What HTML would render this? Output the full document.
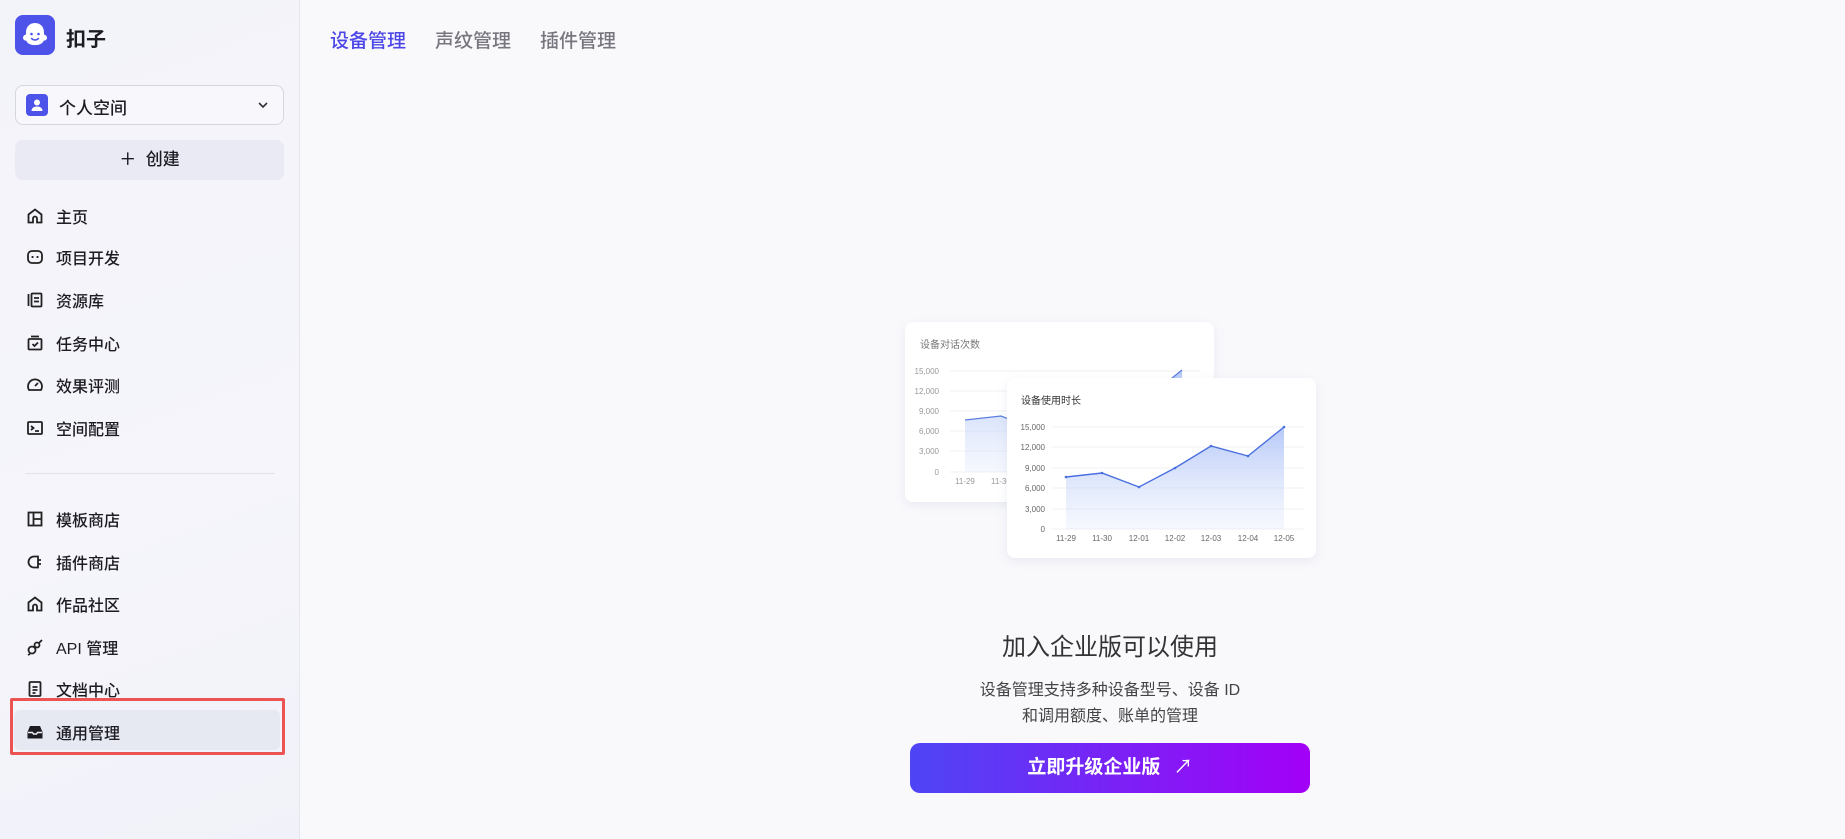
<!DOCTYPE html>
<html><head><meta charset="utf-8"><style>
*{margin:0;padding:0;box-sizing:border-box}
body{width:1845px;height:839px;overflow:hidden;background:#f9f9fc;font-family:"Liberation Sans","Noto Sans CJK SC",sans-serif;color:#1d1c23;position:relative}
.side{position:absolute;left:0;top:0;width:300px;height:839px;background:linear-gradient(160deg,#f3f4fa,#f5f5fb 60%,#f1f2f9);border-right:1px solid #e6e7ee}
.abs{position:absolute}
.nav{position:absolute;left:26px;font-size:16px;font-weight:500;display:flex;align-items:center;height:24px;color:#1d1c23}
.nav svg{width:18px;height:18px;margin-right:12px}
.tab{position:absolute;top:26px;font-size:19px;color:#77767e;font-weight:500}
</style></head><body>
<div class="side">
  <svg class="abs" style="left:15px;top:15px" width="40" height="40" viewBox="0 0 40 40"><rect width="40" height="40" rx="8" fill="#4d53e8"/><path d="M20 8c-6 0-9 4.5-9 9.5v2c-2 .5-3 1.8-3 3.3 0 1.8 1.5 3 3.3 2.8 1 3 4.5 4.5 8.7 4.5s7.7-1.5 8.7-4.5c1.8.2 3.3-1 3.3-2.8 0-1.5-1-2.8-3-3.3v-2C29 12.5 26 8 20 8z" fill="#fff"/><circle cx="16.5" cy="19" r="1.3" fill="#4d53e8"/><circle cx="23.5" cy="19" r="1.3" fill="#4d53e8"/><path d="M16.5 23.5q3.5 3 7 0" stroke="#4d53e8" stroke-width="1.5" fill="none" stroke-linecap="round"/></svg>
  <div class="abs" style="left:66px;top:23px;font-size:20px;font-weight:bold">扣子</div>
  <div class="abs" style="left:15px;top:85px;width:269px;height:40px;border:1px solid #d5d6de;border-radius:8px;background:#f8f8fc"></div>
  <svg class="abs" style="left:26px;top:94px" width="22" height="22" viewBox="0 0 22 22"><rect width="22" height="22" rx="4" fill="#4d53e8"/><circle cx="11" cy="8.5" r="3" fill="#fff"/><path d="M5.5 17c0-3 2.5-4.5 5.5-4.5s5.5 1.5 5.5 4.5z" fill="#fff"/></svg>
  <div class="abs" style="left:59px;top:94px;font-size:17px;font-weight:500">个人空间</div>
  <svg class="abs" style="left:256px;top:98px" width="14" height="14" viewBox="0 0 14 14"><path d="M3 5l4 4 4-4" stroke="#333" stroke-width="1.6" fill="none"/></svg>
  <div class="abs" style="left:15px;top:140px;width:269px;height:40px;border-radius:8px;background:#e9eaf3;text-align:center;line-height:40px;font-size:17px;font-weight:500">＋&nbsp; 创建</div>

  <div class="nav" style="top:204px"><svg viewBox="0 0 18 18" fill="none" stroke="#222" stroke-width="1.8"><path d="M2.5 7.5L9 2.5l6.5 5V15.5H11v-4a2 2 0 0 0-4 0v4H2.5z"/></svg>主页</div>
  <div class="nav" style="top:245px"><svg viewBox="0 0 18 18" fill="none" stroke="#222" stroke-width="1.8"><rect x="2" y="3" width="14" height="12" rx="4"/><path d="M6.5 8v2M11.5 8v2"/></svg>项目开发</div>
  <div class="nav" style="top:288px"><svg viewBox="0 0 18 18" fill="none" stroke="#222" stroke-width="1.8"><path d="M2.5 3v12"/><rect x="5.5" y="2.5" width="10" height="13" rx="1"/><path d="M8 7h5M8 10.5h5"/></svg>资源库</div>
  <div class="nav" style="top:331px"><svg viewBox="0 0 18 18" fill="none" stroke="#222" stroke-width="1.8"><path d="M5 2.5h8"/><rect x="2.5" y="5" width="13" height="10.5" rx="1"/><path d="M6.5 10l2 2 3.5-3.5"/></svg>任务中心</div>
  <div class="nav" style="top:373px"><svg viewBox="0 0 18 18" fill="none" stroke="#222" stroke-width="1.8"><path d="M3 14a7 7 0 1 1 12 0z"/><path d="M9 10l3-3"/></svg>效果评测</div>
  <div class="nav" style="top:416px"><svg viewBox="0 0 18 18" fill="none" stroke="#222" stroke-width="1.8"><rect x="2" y="3" width="14" height="12" rx="1"/><path d="M5 7l2.5 2L5 11M9 12h4"/></svg>空间配置</div>
  <div class="abs" style="left:25px;top:473px;width:250px;height:1px;background:#e2e3ea"></div>
  <div class="nav" style="top:507px"><svg viewBox="0 0 18 18" fill="none" stroke="#222" stroke-width="1.8"><rect x="2.5" y="2.5" width="13" height="13"/><path d="M7.5 2.5v13M7.5 9h8"/></svg>模板商店</div>
  <div class="nav" style="top:550px"><svg viewBox="0 0 18 18" fill="none" stroke="#222" stroke-width="1.8"><path d="M12 3.5H8a5.5 5.5 0 0 0 0 11h4z"/><path d="M12 7h3M12 11h3"/></svg>插件商店</div>
  <div class="nav" style="top:592px"><svg viewBox="0 0 18 18" fill="none" stroke="#222" stroke-width="1.8"><path d="M2.5 7.5L9 2.5l6.5 5V15.5H11v-4a2 2 0 0 0-4 0v4H2.5z"/></svg>作品社区</div>
  <div class="nav" style="top:635px"><svg viewBox="0 0 18 18" fill="none" stroke="#222" stroke-width="1.8"><circle cx="6" cy="12" r="3.5"/><circle cx="11" cy="7" r="2.5"/><path d="M13 5l3-3M4 16l-2 1"/></svg>API 管理</div>
  <div class="nav" style="top:677px"><svg viewBox="0 0 18 18" fill="none" stroke="#222" stroke-width="1.8"><rect x="3.5" y="2" width="11" height="14" rx="1"/><path d="M6.5 7h5M6.5 10h5M6.5 13h3"/></svg>文档中心</div>
  <div class="abs" style="left:14px;top:710px;width:266px;height:40px;border-radius:6px;background:#e6e8f2"></div>
  <div class="abs" style="left:10px;top:698px;width:275px;height:57px;border:3px solid #ec5454;border-radius:2px"></div>
  <div class="nav" style="top:720px"><svg viewBox="0 0 18 18"><path d="M4 3h10l2.5 6v6.5h-15V9z" fill="#1d1c23"/><path d="M2 9.5h4.5l1 1.5h3l1-1.5H16" stroke="#f0f1f7" stroke-width="1.4" fill="none"/></svg>通用管理</div>
</div>

<div class="tab" style="left:330px;color:#4d47e8">设备管理</div>
<div class="tab" style="left:435px">声纹管理</div>
<div class="tab" style="left:540px">插件管理</div>

<svg class="abs" style="left:895px;top:312px" width="440" height="270" viewBox="-10 -10 440 270">
<defs>
<linearGradient id="g" x1="0" y1="0" x2="0" y2="1"><stop offset="0" stop-color="#a9bff7" stop-opacity=".85"/><stop offset="1" stop-color="#dfe7fb" stop-opacity=".3"/></linearGradient>
<filter id="s" x="-20%" y="-20%" width="140%" height="140%"><feDropShadow dx="0" dy="3" stdDeviation="5" flood-color="#8890b0" flood-opacity=".15"/></filter>
</defs>
<g font-family="Liberation Sans" fill="#999" font-size="8">
<rect x="0" y="0" width="309" height="180" rx="8" fill="#fff" filter="url(#s)"/>
<text x="15" y="26" font-size="10" fill="#777" font-family="Liberation Sans,Noto Sans CJK SC">设备对话次数</text>
<g stroke="#f0f0f4"><line x1="45" y1="49" x2="295" y2="49"/><line x1="45" y1="69" x2="295" y2="69"/><line x1="45" y1="89" x2="295" y2="89"/><line x1="45" y1="109" x2="295" y2="109"/><line x1="45" y1="129" x2="295" y2="129"/><line x1="45" y1="150" x2="295" y2="150"/></g>
<g text-anchor="end"><text x="34" y="52">15,000</text><text x="34" y="72">12,000</text><text x="34" y="92">9,000</text><text x="34" y="112">6,000</text><text x="34" y="132">3,000</text><text x="34" y="153">0</text></g>
<path d="M60 98L96 94L132 108L168 89L204 68L240 78L277 48V150H60z" fill="url(#g)"/>
<path d="M60 98L96 94L132 108L168 89L204 68L240 78L277 48" stroke="#5b7fe0" stroke-width="1.3" fill="none"/>
<text x="50" y="162">11-29</text><text x="86" y="162">11-30</text>
</g>
<g transform="translate(102,56)" font-family="Liberation Sans" fill="#666" font-size="8">
<rect x="0" y="0" width="309" height="180" rx="8" fill="#fff" filter="url(#s)"/>
<text x="14" y="26" font-size="10" fill="#333" font-family="Liberation Sans,Noto Sans CJK SC">设备使用时长</text>
<g stroke="#f0f0f4"><line x1="45" y1="49" x2="297" y2="49"/><line x1="45" y1="69" x2="297" y2="69"/><line x1="45" y1="90" x2="297" y2="90"/><line x1="45" y1="110" x2="297" y2="110"/><line x1="45" y1="131" x2="297" y2="131"/><line x1="45" y1="151" x2="297" y2="151"/></g>
<g text-anchor="end"><text x="38" y="52">15,000</text><text x="38" y="72">12,000</text><text x="38" y="93">9,000</text><text x="38" y="113">6,000</text><text x="38" y="134">3,000</text><text x="38" y="154">0</text></g>
<path d="M59 99L95 95L132 109L168 90L204 68L241 78L277 49V151H59z" fill="url(#g)"/>
<path d="M59 99L95 95L132 109L168 90L204 68L241 78L277 49" stroke="#4a6fe0" stroke-width="1.4" fill="none"/>
<g fill="#4a6fe0"><circle cx="59" cy="99" r="1.3"/><circle cx="95" cy="95" r="1.3"/><circle cx="132" cy="109" r="1.3"/><circle cx="168" cy="90" r="1.3"/><circle cx="204" cy="68" r="1.3"/><circle cx="241" cy="78" r="1.3"/><circle cx="277" cy="49" r="1.3"/></g>
<g text-anchor="middle"><text x="59" y="163">11-29</text><text x="95" y="163">11-30</text><text x="132" y="163">12-01</text><text x="168" y="163">12-02</text><text x="204" y="163">12-03</text><text x="241" y="163">12-04</text><text x="277" y="163">12-05</text></g>
</g>
</svg>

<div class="abs" style="left:910px;width:400px;top:627px;text-align:center;font-size:24px;color:#333">加入企业版可以使用</div>
<div class="abs" style="left:860px;width:500px;top:678px;text-align:center;font-size:16px;line-height:26px;color:#444">设备管理支持多种设备型号、设备 ID<br>和调用额度、账单的管理</div>
<div class="abs" style="left:910px;top:743px;width:400px;height:50px;border-radius:10px;background:linear-gradient(90deg,#4e45f5,#a300f7);color:#fff;font-size:19px;font-weight:bold;text-align:center;line-height:50px">立即升级企业版 <span style="font-weight:normal;margin-left:8px">↗</span></div>
</body></html>
